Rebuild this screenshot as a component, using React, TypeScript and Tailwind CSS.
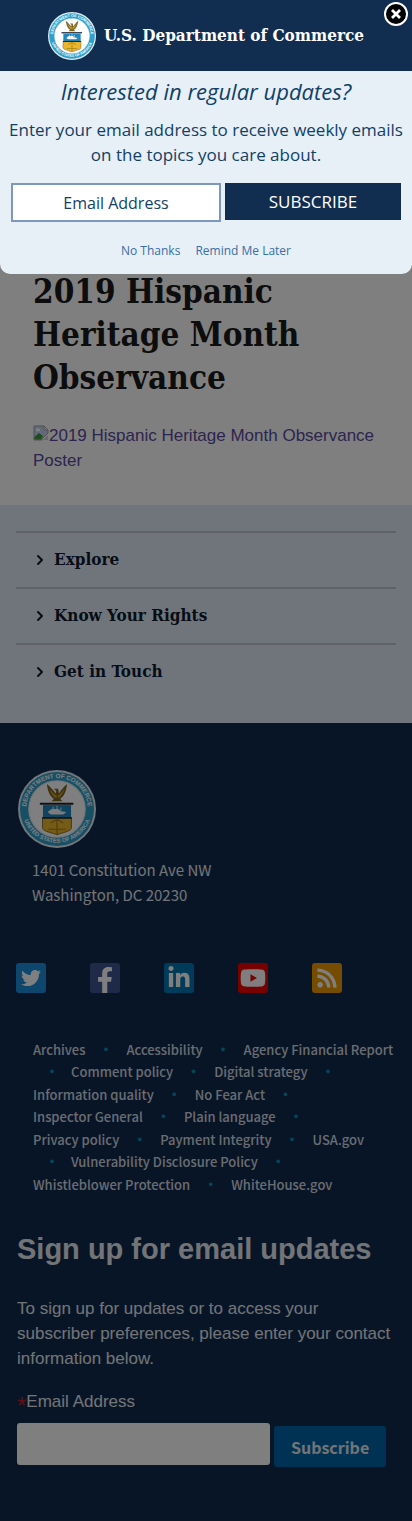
import { useId } from "react";
import { FaTwitter, FaFacebookF, FaLinkedinIn, FaYoutube, FaRss } from "react-icons/fa";
import { ChevronRight } from "lucide-react";
import type { ReactNode } from "react";

const serif = "font-['DejaVu_Serif_Condensed','DejaVu_Serif',serif]";

function Seal({ className }: { className: string }) {
  const id = useId();
  return (
    <svg viewBox="0 0 100 100" className={className} role="img" aria-label="Department of Commerce seal">
      <defs>
        <path id={`${id}-top`} d="M 11 56 A 39.5 39.5 0 1 1 89 56" />
        <path id={`${id}-bottom`} d="M 5.5 55 A 45 45 0 0 0 94.5 55" />
      </defs>
      <circle cx="50" cy="50" r="50" fill="#e6eef2" />
      <circle cx="50" cy="50" r="47.5" fill="#2f9fcb" />
      <circle cx="50" cy="50" r="37" fill="#dfeaf0" />
      <circle cx="50" cy="50" r="35.5" fill="#fff" />
      <g fill="#fff" fontFamily="Liberation Sans, sans-serif" fontWeight="700" fontSize="8">
        <text>
          <textPath href={`#${id}-top`} startOffset="50%" textAnchor="middle">DEPARTMENT OF COMMERCE</textPath>
        </text>
        <text fontSize="7.5">
          <textPath href={`#${id}-bottom`} startOffset="50%" textAnchor="middle">UNITED STATES OF AMERICA</textPath>
        </text>
      </g>
      <path d="M37 18 C38 27 41 34 46 37 L43 40 L57 40 L54 37 C59 34 62 27 63 18 C59 21 55 26 52.500 30 L51.500 24 L46 24 L49 27 L48.500 30 C45 26 41 21 37 18 Z" fill="#7c6524" />
      <path d="M40 23 C42 30 45 34 49 36 L50 33 C46 31 43 28 40 23 Z M60 23 C58 30 55 34 51 36 L51 33 C54 31 57 28 60 23 Z" fill="#c9a335" />
      <path d="M28 42 H71 V44.500 H28 Z" fill="#1c2430" />
      <path d="M32 45 H68 V62 H32 Z" fill="#2086bf" />
      <path d="M38 54 L43 50 L52 50 L55 53 L62 54 L58 57 L42 57 Z" fill="#f4f8fa" />
      <path d="M45 50 V47 M50 50 V46 M55 52 V48" stroke="#f4f8fa" strokeWidth="1.200" />
      <path d="M31.500 61 H68.500 V74 C68.500 78 62 79 50 83 C38 79 31.500 78 31.500 74 Z" fill="#e9b62c" stroke="#6a5520" strokeWidth="1" />
      <path d="M31 61.500 H69" stroke="#1c2430" strokeWidth="2" />
      <path d="M50 62 V82 M42 68 L50 63 L58 68 M39 76 H61" stroke="#a77d16" strokeWidth="1.500" fill="none" />
    </svg>
  );
}

function BrokenImage() {
  return (
    <svg viewBox="0 0 16 16" className="inline-block size-4 align-baseline" aria-hidden="true">
      <path d="M1 1 H11 L15 5 V8 L9 14 V15 H1 Z" fill="#c4d2f4" stroke="#a3a3a3" />
      <path d="M11 1 V5 H15 Z" fill="#fff" stroke="#a3a3a3" />
      <ellipse cx="5" cy="5" rx="2.200" ry="1.400" fill="#fff" />
      <path d="M1.500 14.500 V12 L6 8 L10 11 L8 14.500 Z" fill="#3f9a3a" />
      <path d="M15 10 V15 H10 Z" fill="#d5d5d5" />
    </svg>
  );
}

const menu = ["Explore", "Know Your Rights", "Get in Touch"];

const social: { name: string; color: string; icon: ReactNode }[] = [
  { name: "Twitter", color: "items-center justify-center bg-[#1a8fdc]", icon: <FaTwitter className="size-5" /> },
  { name: "Facebook", color: "items-end justify-center bg-[#3f5390]", icon: <FaFacebookF className="size-[26px]" /> },
  { name: "LinkedIn", color: "items-center justify-center bg-[#0077b5]", icon: <FaLinkedinIn className="size-6" /> },
  { name: "YouTube", color: "items-center justify-center bg-[#ee0000]", icon: <FaYoutube className="size-[26px]" /> },
  { name: "RSS", color: "items-center justify-center bg-[#ec9a00]", icon: <FaRss className="size-[22px]" /> },
];

const DOT = "•";
const linkRows = [
  ["Archives", DOT, "Accessibility", DOT, "Agency Financial Report"],
  [DOT, "Comment policy", DOT, "Digital strategy", DOT],
  ["Information quality", DOT, "No Fear Act", DOT],
  ["Inspector General", DOT, "Plain language", DOT],
  ["Privacy policy", DOT, "Payment Integrity", DOT, "USA.gov"],
  [DOT, "Vulnerability Disclosure Policy", DOT],
  ["Whistleblower Protection", DOT, "WhiteHouse.gov"],
];

function SubscribeDialog() {
  return (
    <div role="dialog" aria-label="Email updates" className="absolute inset-x-0 top-0 overflow-hidden rounded-b-[10px] bg-[#e7eff7] text-center font-['Open_Sans',sans-serif] text-[#123f66]">
      <div className="flex h-[71px] items-center justify-center gap-2 bg-[#112e51]">
        <Seal className="size-12" />
        <span className={`${serif} text-[17px] font-bold text-white`}>U.S. Department of Commerce</span>
      </div>
      <button aria-label="Close" className="absolute top-[2px] right-1 flex size-6 items-center justify-center rounded-full border-2 border-white bg-black">
        <svg viewBox="0 0 12 12" className="size-3" aria-hidden="true">
          <path d="M2 2 L10 10 M10 2 L2 10" stroke="#fff" strokeWidth="2.800" />
        </svg>
      </button>
      <form className="pt-1 pb-[14px]" onSubmit={(e) => e.preventDefault()}>
        <h2 className="text-[22px] leading-8 italic">Interested in regular updates?</h2>
        <p className="px-1 pt-2.5 text-[17px] leading-[25px]">Enter your email address to receive weekly emails on the topics you care about.</p>
        <div className="mt-4 flex items-start gap-1 px-[11px]">
          <input aria-label="Email Address" placeholder="Email Address" className="h-[39px] min-w-0 flex-1 border-2 border-[#7c98c0] bg-white text-center text-base placeholder:text-[#123f66]" />
          <button className="h-[37px] w-[176px] bg-[#112e51] text-[17px] text-white">SUBSCRIBE</button>
        </div>
        <div className="mt-5 flex justify-center gap-[15px] text-xs leading-[18px] text-[#3a6ea5]">
          <button type="button">No Thanks</button>
          <button type="button">Remind Me Later</button>
        </div>
      </form>
    </div>
  );
}

export default function App() {
  return (
    <div className="relative bg-white font-['Liberation_Sans',Arial,sans-serif]">
      <main className="px-[33px] pt-[270px] pb-8">
        <h1 className={`${serif} text-[33px] leading-[43px] font-bold text-[#1b1b1b]`}>2019 Hispanic Heritage Month Observance</h1>
        <p className="mt-6 text-[17px] leading-[25px]">
          <a href="#poster" className="text-[#5a4a9c]">
            <BrokenImage />2019 Hispanic Heritage Month Observance Poster
          </a>
        </p>
      </main>

      <nav className="bg-[#e1ebf7] px-4 pt-[26px] pb-6">
        {menu.map((label) => (
          <button key={label} className={`${serif} flex h-14 w-full items-center gap-1.5 border-t-2 border-[#bcc4d0] pl-4 text-left text-[17px] font-bold text-[#0f1a2c]`}>
            <ChevronRight className="size-4" strokeWidth={3} />
            {label}
          </button>
        ))}
      </nav>

      <footer className="bg-[#112b4d] px-4 pt-[47px] pb-[54px] text-[#e4e8ee]">
        <Seal className="ml-0.5 size-[78px]" />
        <address className="mt-[9px] pl-4 font-['Noto_Sans_CJK_SC',sans-serif] text-[15px] leading-[25px] not-italic">
          1401 Constitution Ave NW
          <br />
          Washington, DC 20230
        </address>
        <div className="mt-14 flex gap-11">
          {social.map((s) => (
            <a key={s.name} href="#social" aria-label={s.name} className={`flex size-[30px] rounded-[3px] text-white ${s.color}`}>
              {s.icon}
            </a>
          ))}
        </div>
        <div className="mt-[46px] pl-[17px] font-['Noto_Sans_CJK_SC',sans-serif] text-[13px] leading-[1.73] font-medium text-[#d4dae2]">
          {linkRows.map((row, r) => (
            <div key={r} className="flex whitespace-nowrap">
              {row.map((item, i) =>
                item === DOT ? (
                  <span key={i} className="w-[41px] text-center font-['Liberation_Sans',sans-serif] text-[#0292b0] first:w-[38px]">{DOT}</span>
                ) : (
                  <a key={i} href="#link">{item}</a>
                ),
              )}
            </div>
          ))}
        </div>
        <form className="pl-px" onSubmit={(e) => e.preventDefault()}>
          <h2 className="mt-8 text-[29px] leading-[42px] font-bold">Sign up for email updates</h2>
          <p className="mt-[26px] text-[17px] leading-[25px]">
            To sign up for updates or to access your subscriber preferences, please enter your contact information below.
          </p>
          <label htmlFor="email" className="mt-[18px] flex h-[25px] text-[17px] leading-[25px]">
            <span className="pt-1 text-[24px] leading-[25px] text-[#c02020]">*</span>Email Address
          </label>
          <div className="mt-[9px] flex items-start gap-1">
            <input id="email" className="h-[42px] w-[253px] rounded-[3px] bg-white px-2 text-black" />
            <button className="mt-[3px] h-[41px] rounded-[3px] bg-[#0064a8] px-[17px] font-['Noto_Sans_CJK_SC',sans-serif] text-base leading-6 font-bold text-[#e4e8ee]">Subscribe</button>
          </div>
        </form>
      </footer>

      <div className="absolute inset-0 bg-black/50" />
      <SubscribeDialog />
    </div>
  );
}
